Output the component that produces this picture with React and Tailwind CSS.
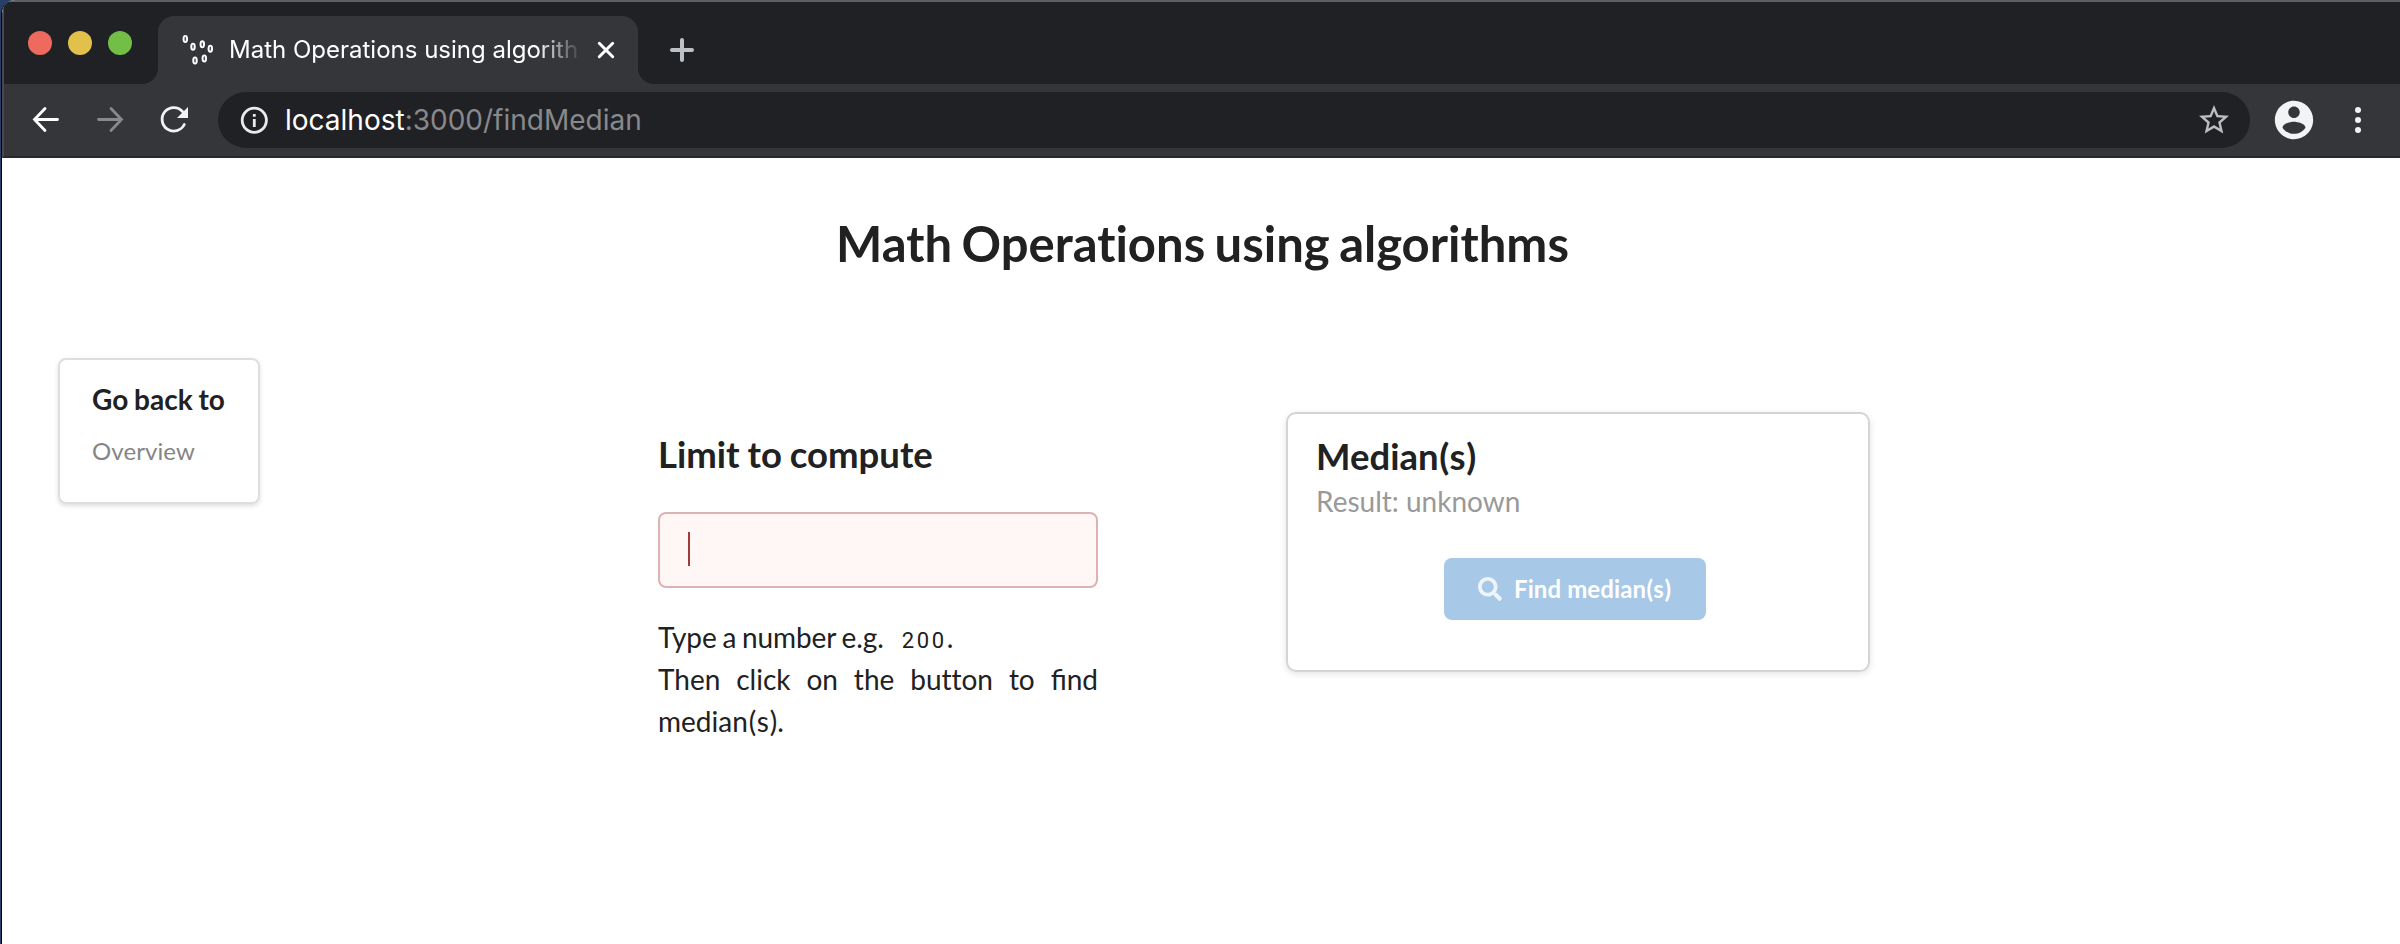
import React from "react";

const nodes = [
  [9.3, 11],
  [17, 18.7],
  [26.3, 16.3],
  [34.3, 20.7],
  [28.3, 30.5],
  [19, 32.5],
];

function Favicon() {
  return (
    <svg className="size-11 shrink-0" viewBox="0 0 44 44" fill="none">
      <path d="M9.3 11L17 18.7L26.3 16.3L34.3 20.7L28.3 30.5L19 32.5L17 18.7M26.3 16.3L28.3 30.5" stroke="#2c2d30" strokeWidth="1" />
      {nodes.map(([x, y]) => (
        <ellipse key={x} cx={x} cy={y} rx="1.8" ry="3.1" fill="#55565a" stroke="#fff" strokeWidth="1.9" />
      ))}
    </svg>
  );
}

function TabStrip() {
  return (
    <div className="flex h-[82px] w-full">
      <div className="flex w-[154px] shrink-0 gap-4 rounded-br-[16px] bg-[#202124] pt-[29px] pl-6">
        <span className="size-6 rounded-full bg-[#ee6a5f]" />
        <span className="size-6 rounded-full bg-[#e1c04c]" />
        <span className="size-6 rounded-full bg-[#72be47]" />
      </div>
      <div className="w-[480px] shrink-0 bg-linear-to-b from-[#202124] from-50% to-[#35363a] to-50% pt-[14px]">
        <div className="flex h-[68px] items-center rounded-t-[16px] bg-[#35363a] pl-[18px]">
          <Favicon />
          <span className="ml-[9px] w-[351px] overflow-hidden font-['Inter',sans-serif] text-[24px] leading-[32px] whitespace-nowrap text-white [mask-image:linear-gradient(to_right,black_308px,transparent_353px)]">
            Math Operations using algorithms
          </span>
          <svg className="ml-[16px] size-5" viewBox="0 0 20 20" fill="none" stroke="#fff" strokeWidth="3" strokeLinecap="round">
            <path d="M3.3 3.3L16.7 16.7M16.7 3.3L3.3 16.7" />
          </svg>
        </div>
      </div>
      <div className="flex flex-1 rounded-bl-[16px] bg-[#202124] pt-9 pl-8">
        <svg className="size-6" viewBox="0 0 24 24" fill="none" stroke="#bdc1c6" strokeWidth="4" strokeLinecap="round">
          <path d="M12 2V22M2 12H22" />
        </svg>
      </div>
    </div>
  );
}

function Toolbar() {
  return (
    <div className="flex h-[72px] items-center pl-[26px]">
      <svg className="size-8 shrink-0" viewBox="0 0 32 32" fill="none" stroke="#fff" strokeWidth="2.8" strokeLinecap="round">
        <path d="M15 4.5L4.5 15.5L15 26.5M4.5 15.5H27.5" />
      </svg>
      <svg className="ml-8 size-8 shrink-0" viewBox="0 0 32 32" fill="none" stroke="#88898c" strokeWidth="2.8" strokeLinecap="round">
        <path d="M17 4.5L27.5 15.5L17 26.5M27.5 15.5H4.5" />
      </svg>
      <svg className="ml-8 size-8 shrink-0" viewBox="0 0 32 32" fill="none">
        <path d="M24.5 7.5A11.7 11.7 0 1 0 26.3 20.5" stroke="#f1f3f4" strokeWidth="2.8" strokeLinecap="round" />
        <path d="M30 3V14H19Z" fill="#f1f3f4" />
      </svg>
      <div className="ml-7 flex h-14 w-[2032px] shrink-0 items-center rounded-full bg-[#202124] pr-[18px] pl-5">
        <svg className="size-8" viewBox="0 0 32 32" fill="none">
          <circle cx="16.3" cy="16.3" r="12.1" stroke="#e8eaed" strokeWidth="2.8" />
          <path d="M14.9 10h2.8v2.8h-2.8zM14.9 15h2.8v8h-2.8z" fill="#e8eaed" />
        </svg>
        <div className="ml-[15px] flex-1 font-['Inter',sans-serif] text-[28px] leading-[40px] text-[#88898c]">
          <span className="text-white">localhost</span>:3000/findMedian
        </div>
        <svg className="size-9" viewBox="0 0 24 24" fill="#bcbdbf">
          <path d="M22 9.24l-7.19-.62L12 2 9.19 8.63 2 9.24l5.46 4.73L5.82 21 12 17.27 18.18 21l-1.63-7.03L22 9.24zM12 15.4l-3.76 2.27 1-4.28-3.32-2.88 4.38-.38L12 6.1l1.71 4.04 4.38.38-3.32 2.88 1 4.28L12 15.4z" />
        </svg>
      </div>
      <svg className="ml-[21px] size-[46px] shrink-0" viewBox="0 0 24 24" fill="#f1f3f4">
        <path d="M12 2C6.48 2 2 6.48 2 12s4.48 10 10 10 10-4.48 10-10S17.52 2 12 2zm0 3c1.66 0 3 1.34 3 3s-1.34 3-3 3-3-1.34-3-3 1.34-3 3-3zm0 14.2c-2.5 0-4.71-1.28-6-3.22.03-1.99 4-3.08 6-3.08 1.99 0 5.97 1.09 6 3.08-1.29 1.94-3.5 3.22-6 3.22z" />
      </svg>
      <div className="ml-[38px] flex flex-col gap-1">
        <span className="size-1.5 rounded-full bg-[#f1f3f4]" />
        <span className="size-1.5 rounded-full bg-[#f1f3f4]" />
        <span className="size-1.5 rounded-full bg-[#f1f3f4]" />
      </div>
    </div>
  );
}

export default function App() {
  return (
    <div className="h-[944px] w-[2400px] overflow-hidden bg-[#27406a] pl-px">
      <div className="flex h-full flex-col overflow-hidden rounded-tl-[14px] border-l border-black bg-white">
        <header className="h-[158px] shrink-0 rounded-tl-[13px] border-t-2 border-b-2 border-l-2 border-t-[#5e5f62] border-b-[#28292c] border-l-[#48494d] bg-[#35363a]">
          <TabStrip />
          <Toolbar />
        </header>
        <main className="flex-1 font-['Lato',sans-serif] text-[#212121] [font-variant-ligatures:none]">
          <h1 className="pt-[55px] pl-[3px] text-center text-[49px] leading-[60px] font-bold [word-spacing:-2.5px]">
            Math Operations using algorithms
          </h1>
          <div className="flex items-start pt-px">
            <nav className="mt-[84px] ml-14 h-[146px] w-[202px] shrink-0 rounded-[8px] border-2 border-[#dededf] pt-[19px] pl-8 shadow-[0_2px_4px_rgba(34,36,38,0.15)]">
              <h3 className="text-[28px] leading-[40px] font-bold [word-spacing:-1px]">Go back to</h3>
              <a className="mt-[14px] block text-[24px] leading-[36px] tracking-[0.1px] text-[#858585]">Overview</a>
            </nav>
            <section className="mt-[158px] ml-[398px] w-[440px] shrink-0">
              <h2 className="text-[36.5px] leading-[44px] font-bold [word-spacing:-1px]">Limit to compute</h2>
              <div className="mt-9 flex h-[76px] items-start rounded-[8px] border-2 border-[#dcb2b2] bg-[#fff6f6] pt-[18px] pl-7">
                <span className="h-[34px] w-0.5 bg-[#9f3a38]" />
              </div>
              <p className="mt-7 text-justify text-[28px] leading-[42px]">
                <span className="tracking-[-0.1px] [word-spacing:-1.3px]">Type a number e.g.</span>
                <span className="ml-[18px] font-['Roboto',sans-serif] text-[22px] leading-none tracking-[2.7px]">200</span>.
                <br />
                Then click on the button to <span className="[font-variant-ligatures:normal]">find</span> media
                <span className="tracking-[1px]">n(s</span>).
              </p>
            </section>
            <section className="mt-[138px] ml-[188px] h-[260px] w-[584px] shrink-0 rounded-[10px] border-2 border-[#d4d4d5] px-7 pt-[19px] shadow-[0_2px_6px_rgba(34,36,38,0.12)]">
              <h2 className="text-[36.5px] leading-[46px] font-bold">
                Media<span className="tracking-[0.8px]">n(s</span>)
              </h2>
              <p className="mt-px text-[28px] leading-[42px] text-[#999999]">Result: unknown</p>
              <button className="mt-9 ml-32 flex h-[62px] w-[262px] items-center rounded-[8px] bg-[#a7c8e7] pl-[34px] text-white">
                <svg className="size-6 opacity-80" viewBox="0 0 512 512" fill="#fff">
                  <path d="M505 442.700L405.300 343c-4.500-4.500-10.600-7-17-7H372c27.600-35.300 44-79.700 44-128C416 93.100 322.900 0 208 0S0 93.100 0 208s93.100 208 208 208c48.300 0 92.700-16.400 128-44v16.300c0 6.400 2.500 12.500 7 17l99.700 99.700c9.400 9.400 24.600 9.400 33.900 0l28.300-28.300c9.400-9.400 9.400-24.600.1-34zM208 336c-70.700 0-128-57.200-128-128 0-70.700 57.200-128 128-128 70.700 0 128 57.200 128 128 0 70.700-57.200 128-128 128z" />
                </svg>
                <span className="ml-[12px] text-[24px] leading-[30px] font-bold tracking-[0.1px]">
                  Find media<span className="tracking-[0.6px]">n(s</span>)
                </span>
              </button>
            </section>
          </div>
        </main>
      </div>
    </div>
  );
}
